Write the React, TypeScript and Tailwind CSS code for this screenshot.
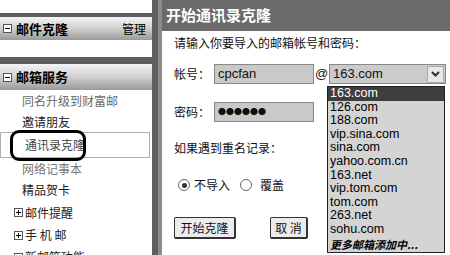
import React from "react"

const font = { fontFamily: '"Noto Sans CJK SC", "Liberation Sans", sans-serif' }
const latin = { fontFamily: '"Liberation Sans", "Noto Sans CJK SC", sans-serif' }

const domains = [
    "163.com",
    "126.com",
    "188.com",
    "vip.sina.com",
    "sina.com",
    "yahoo.com.cn",
    "163.net",
    "vip.tom.com",
    "tom.com",
    "263.net",
    "sohu.com",
]

function Box({ plus }: { plus?: boolean }) {
    return (
        <span className="inline-flex shrink-0 w-[9px] h-[9px] border border-[#555] bg-white items-center justify-center mr-[2px] relative">
            <span className="absolute w-[5px] h-[1px] bg-black" />
            {plus && <span className="absolute w-[1px] h-[5px] bg-black" />}
        </span>
    )
}

function SideHeader({ title, right, h }: { title: string; right?: string; h: string }) {
    return (
        <div className={`${h} shrink-0 flex items-center justify-between px-[3px] bg-gradient-to-b from-[#f4f4f4] via-[#d0d0d0] to-[#9a9a9a] text-[13px] font-bold text-black`}>
            <span className="flex items-center gap-[2px]">
                <Box />
                {title}
            </span>
            {right && <span className="font-normal text-[12px] pr-[3px]">{right}</span>}
        </div>
    )
}

export default function App() {
    return (
        <div className="w-[450px] h-[255px] bg-[#5e5e5e] flex overflow-hidden relative" style={font}>
            <aside className="w-[152px] shrink-0 flex flex-col">
                <div className="h-[13px] shrink-0 bg-white" />
                <div className="h-[4px] shrink-0" />
                <SideHeader h="h-[23px]" title="邮件克隆" right="管理" />
                <div className="h-[17px] shrink-0 bg-white" />
                <div className="h-[7px] shrink-0" />
                <SideHeader h="h-[26px]" title="邮箱服务" />
                <div className="flex-1 min-h-0 overflow-hidden bg-white flex flex-col text-[12px] relative">
                    <div className="h-[21px] shrink-0 flex items-center pl-[22px] text-[#6a6a6a]">同名升级到财富邮</div>
                    <div className="h-[21px] shrink-0 flex items-center pl-[22px] text-[#222]">邀请朋友</div>
                    <div className="h-[26px] shrink-0 flex items-center pl-[24px] text-[#444] border border-[#b0b0b0] mr-[2px]">通讯录克隆</div>
                    <div className="h-[21px] shrink-0 flex items-center pl-[22px] text-[#777]">网络记事本</div>
                    <div className="h-[22px] shrink-0 flex items-center pl-[22px] text-[#222]">精品贺卡</div>
                    <div className="h-[23px] shrink-0 flex items-center pl-[14px] text-[#222]"><Box plus />邮件提醒</div>
                    <div className="h-[22px] shrink-0 flex items-center pl-[14px] text-[#222] whitespace-pre"><Box plus />手 机 邮</div>
                    <div className="h-[22px] shrink-0 flex items-center pl-[14px] text-[#222]"><Box plus />新邮箱功能</div>
                    <div className="absolute left-[10px] top-[40px] w-[76px] h-[31px] border-[3px] border-black rounded-[9px]" />
                </div>
            </aside>
            <div className="w-[6px] shrink-0" />
            <main className="flex-1 flex flex-col bg-white border-l-[4px] border-[#8c8c8c]">
                <div className="h-[31px] shrink-0 bg-[#6a6a6a] flex items-center pl-[4px] text-white font-bold text-[15px]">
                    开始通讯录克隆
                </div>
                <div className="flex flex-col pl-[12px] text-[12px] text-[#111]">
                    <div className="mt-[3px] h-[18px] flex items-center">请输入你要导入的邮箱帐号和密码：</div>
                    <div className="mt-[12px] h-[20px] flex items-center">
                        <span className="w-[40px]">帐号：</span>
                        <div className="w-[100px] h-[20px] bg-[#c9c9c9] border border-[#888] flex items-center pl-[3px] text-[13px]" style={latin}>cpcfan</div>
                        <span className="w-[15px] text-center text-[13px]" style={latin}>@</span>
                        <div className="w-[117px] h-[20px] bg-[#cbcbcb] border border-[#888] flex items-center pl-[3px] text-[13px]" style={latin}>
                            <span className="flex-1">163.com</span>
                            <span className="w-[17px] h-[17px] bg-[#e8e8e8] border border-[#aaa] flex items-center justify-center mr-[1px]">
                                <svg width="9" height="6" viewBox="0 0 9 6">
                                    <path d="M1 1 L4.5 4.5 L8 1" stroke="#333" strokeWidth="2" fill="none" />
                                </svg>
                            </span>
                        </div>
                    </div>
                    <div className="mt-[18px] h-[20px] flex items-center">
                        <span className="w-[40px]">密码：</span>
                        <div className="w-[100px] h-[20px] bg-[#c9c9c9] border border-[#888] flex items-center pl-[3px] text-[8px]">●●●●●●</div>
                    </div>
                    <div className="mt-[17px] h-[18px] flex items-center">如果遇到重名记录：</div>
                    <div className="mt-[19px] h-[18px] flex items-center pl-[4px] gap-[4px]">
                        <span className="w-[12px] h-[12px] rounded-full border border-[#666] flex items-center justify-center">
                            <span className="w-[5px] h-[5px] rounded-full bg-[#333]" />
                        </span>
                        <span className="mr-[6px]">不导入</span>
                        <span className="w-[12px] h-[12px] rounded-full border border-[#666]" />
                        <span className="ml-[4px]">覆盖</span>
                    </div>
                    <div className="mt-[23px] flex items-center">
                        <button className="w-[62px] h-[22px] bg-[#ececec] border border-[#333] border-r-2 border-b-2 rounded-[2px] text-[12px]">开始克隆</button>
                        <button className="w-[38px] h-[22px] bg-[#ececec] border border-[#333] border-r-2 border-b-2 rounded-[2px] ml-[34px] text-[12px] whitespace-pre">取 消</button>
                    </div>
                </div>
            </main>
            <div className="absolute left-[327px] top-[86px] w-[118px] bg-[#d4d4d4] border border-[#222] flex flex-col text-[12.5px] text-black" style={latin}>
                {domains.map((d, i) => (
                    <div key={d + i} className={`h-[13.6px] leading-[13.6px] pl-[2px] ${i === 0 ? "bg-[#3e3e3e] text-white" : ""}`}>{d}</div>
                ))}
                <div className="h-[15px] leading-[15px] pl-[2px] font-bold italic text-[11px]" style={font}>更多邮箱添加中...</div>
            </div>
        </div>
    )
}
